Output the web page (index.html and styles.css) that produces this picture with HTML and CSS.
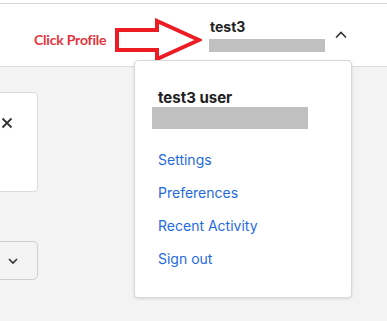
FILE: index.html
```html
<!DOCTYPE html>
<html>
<head>
<meta charset="utf-8">
<link rel="stylesheet" href="styles.css">
</head>
<body>
<div class="topline"></div>
<header class="header">
  <span class="note">Click Profile</span>
  <svg class="arrow" width="88" height="44" viewBox="0 0 88 44">
    <polygon points="3,12 43,12 43,3 85,22 43,41 43,32 3,32" fill="none" stroke="#ed1c24" stroke-width="4" stroke-linejoin="miter"/>
  </svg>
  <div class="profile">
    <div class="pname">test3</div>
    <div class="redact redact-head"></div>
  </div>
  <svg class="caret" width="12" height="8" viewBox="0 0 12 8">
    <polyline points="1,6.5 6,1.5 11,6.5" fill="none" stroke="#333" stroke-width="1.6"/>
  </svg>
  <div class="menu">
    <div class="menu-name">test3 user</div>
    <div class="redact redact-menu"></div>
    <nav class="links">
      <a class="link">Settings</a>
      <a class="link">Preferences</a>
      <a class="link">Recent Activity</a>
      <a class="link">Sign out</a>
    </nav>
  </div>
</header>
<main class="main">
  <div class="card">
    <svg class="close" width="12" height="12" viewBox="0 0 12 12">
      <path d="M1.5 1.5 L10.5 10.5 M10.5 1.5 L1.5 10.5" stroke="#333" stroke-width="1.8" fill="none"/>
    </svg>
  </div>
  <div class="select">
    <svg width="12" height="8" viewBox="0 0 12 8">
      <polyline points="2,2 6,6 10,2" fill="none" stroke="#333" stroke-width="1.6"/>
    </svg>
  </div>
</main>
</body>
</html>
```

FILE: styles.css
```css
html, body {
  margin: 0;
  padding: 0;
}
body {
  width: 387px;
  height: 321px;
  overflow: hidden;
  background: #f3f3f3;
  font-family: Inter, "Liberation Sans", sans-serif;
  color: #222;
}
.topline {
  height: 3px;
  background: #fff;
  border-bottom: 1px solid #d6d6d6;
}
.header {
  position: relative;
  height: 63px;
  background: #fff;
  border-bottom: 1px solid #dcdcdc;
  display: flex;
  align-items: flex-start;
  padding-left: 34px;
  box-sizing: border-box;
}
.note {
  margin-top: 27px;
  font-family: Lato, "Open Sans", sans-serif;
  font-weight: 700;
  font-size: 14px;
  line-height: 17px;
  letter-spacing: -0.2px;
  color: #e8323c;
  width: 80px;
  white-space: nowrap;
  flex: none;
}
.arrow {
  margin-top: 14px;
  display: block;
  flex: none;
}
.profile {
  margin-left: 7px;
  margin-top: 14px;
  width: 116px;
}
.pname {
  font-weight: 700;
  font-size: 14px;
  line-height: 17px;
  color: #222;
  padding-left: 1px;
}
.redact {
  background: #c0c0c0;
}
.redact-head {
  margin-top: 4px;
  height: 13px;
}
.caret {
  display: block;
  margin-left: 10px;
  margin-top: 27px;
}
.menu {
  position: absolute;
  left: 134px;
  top: 56px;
  width: 218px;
  height: 238px;
  box-sizing: border-box;
  background: #fff;
  border: 1px solid #d9d9d9;
  border-radius: 4px;
  box-shadow: 0 1px 3px rgba(0,0,0,0.12);
  padding: 27px 0 0 17px;
  z-index: 2;
}
.menu-name {
  font-weight: 700;
  font-size: 15px;
  line-height: 19px;
  padding-left: 6px;
  color: #222;
}
.redact-menu {
  width: 156px;
  height: 22px;
}
.links {
  display: flex;
  flex-direction: column;
  margin-top: 14px;
  padding-left: 6px;
}
.link {
  font-size: 14px;
  line-height: 33px;
  color: #1f6ae0;
}
.main {
  display: flex;
  flex-direction: column;
  padding-top: 25px;
}
.card {
  width: 48px;
  height: 100px;
  margin-left: -10px;
  box-sizing: border-box;
  background: #fff;
  border: 1px solid #dcdcdc;
  border-radius: 4px;
  padding: 24px 0 0 10px;
}
.close {
  display: block;
}
.select {
  margin-top: 49px;
  width: 48px;
  height: 39px;
  margin-left: -10px;
  box-sizing: border-box;
  background: #f3f3f3;
  border: 1px solid #cfcfcf;
  border-radius: 5px;
  display: flex;
  align-items: center;
  padding-left: 16px;
}
.select svg {
  display: block;
}
```
